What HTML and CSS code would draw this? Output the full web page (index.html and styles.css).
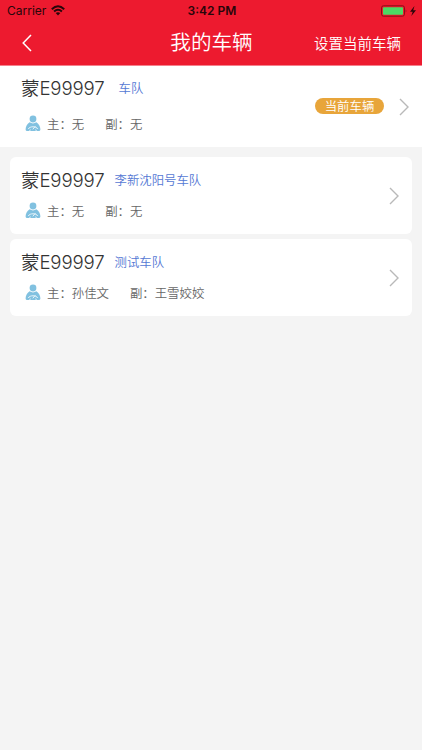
FILE: index.html
```html
<!DOCTYPE html>
<html lang="zh-CN">
  <head>
    <meta charset="UTF-8" />
    <meta name="viewport" content="width=device-width, initial-scale=1.0" />
    <title>我的车辆</title>
    <link rel="stylesheet" href="styles.css">
  </head>
  <body>
    <svg class="symbols" aria-hidden="true">
      <symbol id="driver" viewBox="0 0 16 17">
        <circle cx="8" cy="4" r="3.4" fill="#81c1e0" />
        <path d="M4.6 7.3Q8 9.6 11.4 7.3C14 8.8 15.4 11.8 15.4 14.5Q15.4 16 13.8 16H2.2Q.6 16 .6 14.5C.6 11.8 2 8.8 4.6 7.3Z" fill="#81c1e0" />
        <path d="M3.3 14C4.6 11 11.4 11 12.7 14M4.6 16L5.4 14.6M11.4 16L10.6 14.6M7.8 14.3L10.4 11.2" fill="none" stroke="#fff" stroke-width=".8" />
      </symbol>
      <symbol id="arrow" viewBox="0 0 10 18">
        <path d="M1 1L9 9L1 17" fill="none" stroke="#b9b9b9" stroke-width="1.4" />
      </symbol>
    </svg>

    <header class="header">
      <div class="status-bar">
        <div class="carrier">
          <span>Carrier</span>
          <svg class="wifi" viewBox="0 0 14 11">
            <path d="M.8 4.2Q7-1.6 13.2 4.2M3.1 6.5Q7 2.9 10.9 6.5" fill="none" stroke="#28060a" stroke-width="2" />
            <path d="M4.7 8.1Q7 6.2 9.3 8.1L7 10.5Z" fill="#28060a" />
          </svg>
        </div>
        <div class="time">3:42 PM</div>
        <div class="battery">
          <svg class="battery-icon" viewBox="0 0 36 12">
            <rect x=".5" y=".8" width="23" height="10.4" rx="2" fill="none" stroke="#8c0d19" stroke-width="1" />
            <rect x="2" y="2.2" width="20" height="7.6" rx=".8" fill="#4cd964" />
            <path d="M24.7 4.2Q26.2 6 24.7 7.8Z" fill="#8c0d19" />
            <path d="M33.5 1L29 6.7H31.7L30.3 11L35 5.2H32.2Z" fill="#28060a" />
          </svg>
        </div>
      </div>
      <div class="nav-bar">
        <svg class="back" viewBox="0 0 10 18">
          <path d="M9 1L1.2 9L9 17" fill="none" stroke="#fff" stroke-width="1.5" />
        </svg>
        <h1 class="title">我的车辆</h1>
        <div class="set-current">设置当前车辆</div>
      </div>
    </header>

    <section class="vehicle current">
      <div class="info">
        <div class="plate-row">
          <span class="plate">蒙E99997</span>
          <span class="team">车队</span>
        </div>
        <div class="drivers">
          <svg class="driver-icon"><use href="#driver" /></svg>
          <span>主：无</span>
          <span>副：无</span>
        </div>
      </div>
      <span class="badge">当前车辆</span>
      <svg class="arrow"><use href="#arrow" /></svg>
    </section>

    <main class="list">
      <section class="vehicle card">
        <div class="info">
          <div class="plate-row">
            <span class="plate">蒙E99997</span>
            <span class="team">李新沈阳号车队</span>
          </div>
          <div class="drivers">
            <svg class="driver-icon"><use href="#driver" /></svg>
            <span>主：无</span>
            <span>副：无</span>
          </div>
        </div>
        <svg class="arrow"><use href="#arrow" /></svg>
      </section>
      <section class="vehicle card">
        <div class="info">
          <div class="plate-row">
            <span class="plate">蒙E99997</span>
            <span class="team">测试车队</span>
          </div>
          <div class="drivers">
            <svg class="driver-icon"><use href="#driver" /></svg>
            <span>主：孙佳文</span>
            <span>副：王雪姣姣</span>
          </div>
        </div>
        <svg class="arrow"><use href="#arrow" /></svg>
      </section>
    </main>
  </body>
</html>
```

FILE: styles.css
```css
* {
  box-sizing: border-box;
}
body {
  margin: 0;
  min-height: 100vh;
  background: #f4f4f4;
  color: #333;
  font-family: "Noto Sans CJK SC", sans-serif;
  font-weight: 350;
}
svg {
  display: block;
  flex-shrink: 0;
}
.symbols {
  display: none;
}
.header {
  height: 66px;
  background: #ed1a2f;
  border-bottom: 1px solid #f5808c;
  color: #fff;
}
.status-bar {
  display: grid;
  grid-template-columns: 1fr auto 1fr;
  align-items: center;
  height: 21px;
  padding: 0 5px 0 7px;
  color: #28060a;
  font-family: Inter, sans-serif;
  font-size: 12px;
  font-weight: 400;
}
.carrier {
  display: flex;
  align-items: center;
  gap: 5px;
}
.wifi {
  width: 14px;
  height: 11px;
}
.time {
  font-weight: 600;
}
.battery {
  display: flex;
  justify-content: flex-end;
}
.battery-icon {
  width: 36px;
  height: 12px;
}
.nav-bar {
  display: grid;
  grid-template-columns: 1fr auto 1fr;
  align-items: center;
  height: 43px;
  padding: 0 21px 0 22px;
}
.back {
  width: 10px;
  height: 18px;
}
.title {
  margin: 0;
  padding-bottom: 3px;
  font-size: 20.6px;
  font-weight: 350;
  line-height: 30px;
}
.set-current {
  justify-self: end;
  font-size: 14.5px;
  line-height: 20px;
}
.vehicle {
  display: flex;
  align-items: center;
  background: #fff;
}
.info {
  flex: 1;
  align-self: flex-start;
}
.plate-row {
  display: flex;
  align-items: center;
  height: 24px;
}
.plate {
  width: 84px;
  font-family: Inter, "Noto Sans CJK SC", sans-serif;
  font-size: 18.6px;
  letter-spacing: -0.15px;
  line-height: 24px;
  white-space: nowrap;
}
.team {
  margin-left: 9.5px;
  color: #5478d4;
  font-size: 12.4px;
  line-height: 18px;
}
.drivers {
  display: flex;
  align-items: center;
  gap: 21px;
  height: 18px;
  padding-left: 4px;
  color: #666;
  font-size: 12.4px;
  line-height: 18px;
}
.driver-icon {
  width: 16px;
  height: 17px;
  margin-right: -15px;
  margin-bottom: 2px;
}
.arrow {
  width: 10px;
  height: 18px;
}
.current {
  height: 81px;
  padding: 0 13px 0 21px;
}
.current .info {
  padding-top: 10px;
}
.current .team {
  margin-left: 13.5px;
}
.current .drivers {
  margin-top: 15px;
}
.badge {
  width: 69px;
  height: 16px;
  margin-right: 15px;
  margin-bottom: 1px;
  border-radius: 8px;
  background: #e8a53a;
  color: #fff;
  font-size: 12.4px;
  line-height: 16px;
  text-align: center;
}
.list {
  display: flex;
  flex-direction: column;
  gap: 5px;
  padding: 10px 10px 0;
}
.card {
  height: 77px;
  padding: 0 13px 0 11px;
  border-radius: 6px;
}
.card .info {
  padding-top: 11px;
}
.card .drivers {
  margin-top: 10px;
}
```
